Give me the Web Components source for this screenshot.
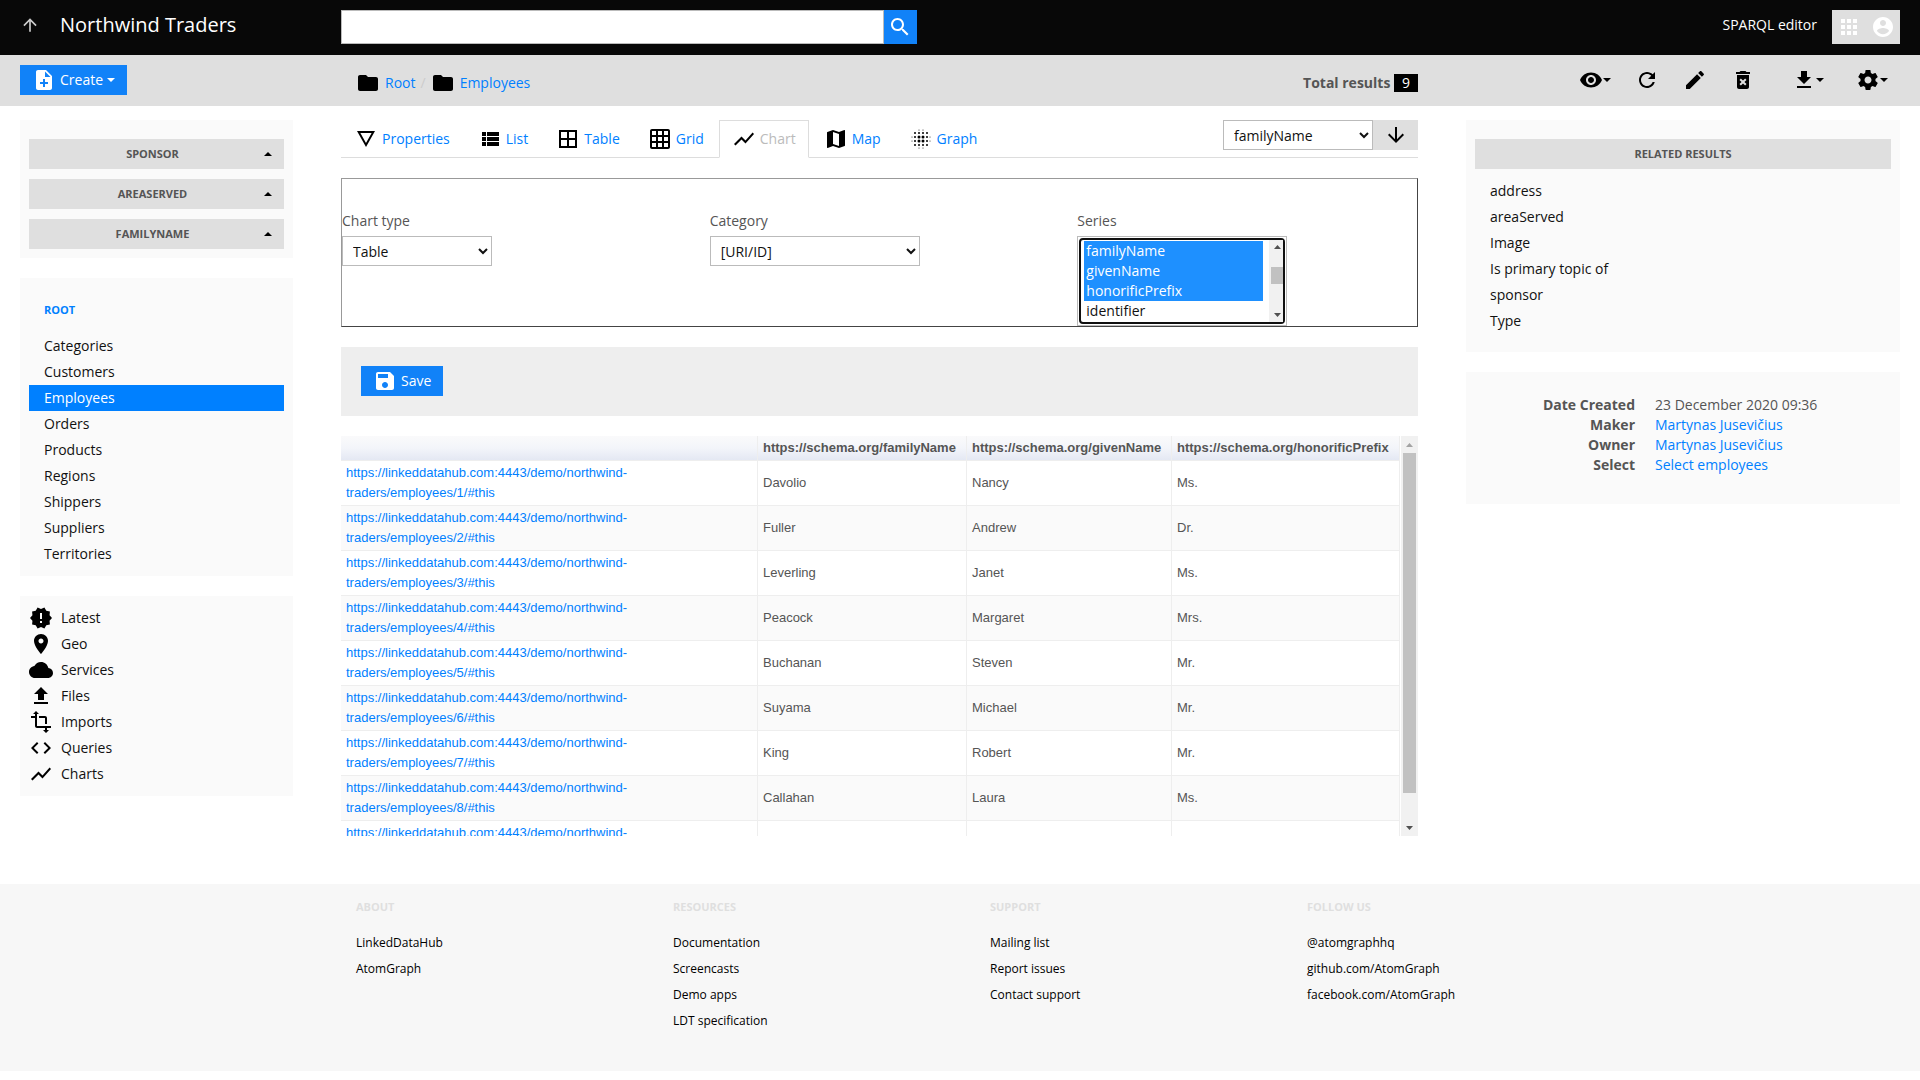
<!DOCTYPE html>
<html lang="en">
<head>
<meta charset="utf-8">
<title>Employees - Northwind Traders</title>
<style>
  body {
    margin: 0;
    background: #fff;
    color: #555;
    font: 14px/20px 'Open Sans', sans-serif;
  }
  .columns {
    display: grid;
    grid-template-columns: 273fr 1077fr 434fr;
    gap: 48px;
    align-items: start;
    padding: 14px 20px 48px;
  }
  .stack {
    display: grid;
    gap: 20px;
    min-width: 0;
  }
</style>
</head>
<body>
<ldh-navbar></ldh-navbar>
<ldh-action-bar></ldh-action-bar>
<div class="columns">
  <aside class="stack">
    <ldh-facets names="sponsor,areaServed,familyName"></ldh-facets>
    <ldh-nav-list heading="Root" current="Employees"
      items="Categories,Customers,Employees,Orders,Products,Regions,Shippers,Suppliers,Territories"></ldh-nav-list>
    <ldh-app-links></ldh-app-links>
  </aside>
  <main class="stack">
    <ldh-view-tabs></ldh-view-tabs>
    <ldh-chart-form></ldh-chart-form>
    <ldh-form-actions>
      <ldh-button icon="save">Save</ldh-button>
    </ldh-form-actions>
    <ldh-result-table></ldh-result-table>
  </main>
  <aside class="stack">
    <ldh-related-results></ldh-related-results>
    <ldh-metadata></ldh-metadata>
  </aside>
</div>
<ldh-footer></ldh-footer>

<script>
const ICONS = {
  up: '<path d="M4 12l1.41 1.41L11 7.83V20h2V7.83l5.58 5.59L20 12l-8-8-8 8z"/>',
  down: '<path d="M20 12l-1.41-1.41L13 16.17V4h-2v12.17l-5.58-5.59L4 12l8 8 8-8z"/>',
  search: '<path d="M15.5 14h-.79l-.28-.27C15.41 12.59 16 11.11 16 9.5 16 5.91 13.09 3 9.5 3S3 5.91 3 9.5 5.91 16 9.5 16c1.61 0 3.09-.59 4.23-1.57l.27.28v.79l5 4.99L20.49 19l-4.99-5zm-6 0C7.01 14 5 11.99 5 9.5S7.01 5 9.5 5 14 7.01 14 9.5 11.99 14 9.5 14z"/>',
  apps: '<path d="M4 8h4V4H4v4zm6 12h4v-4h-4v4zm-6 0h4v-4H4v4zm0-6h4v-4H4v4zm6 0h4v-4h-4v4zm6-10v4h4V4h-4zm-6 4h4V4h-4v4zm6 6h4v-4h-4v4zm0 6h4v-4h-4v4z"/>',
  account: '<path d="M12 2C6.48 2 2 6.48 2 12s4.48 10 10 10 10-4.48 10-10S17.52 2 12 2zm0 3c1.66 0 3 1.34 3 3s-1.34 3-3 3-3-1.34-3-3 1.34-3 3-3zm0 14.2c-2.5 0-4.71-1.28-6-3.22.03-1.99 4-3.08 6-3.08 1.99 0 5.97 1.09 6 3.08-1.29 1.94-3.5 3.22-6 3.22z"/>',
  'note-add': '<path d="M14 2H6c-1.1 0-1.99.9-1.99 2L4 20c0 1.1.89 2 1.99 2H18c1.1 0 2-.9 2-2V8l-6-6zm2 14h-3v3h-2v-3H8v-2h3v-3h2v3h3v2zm-3-7V3.5L18.5 9H13z"/>',
  folder: '<path d="M10 4H4c-1.1 0-1.99.9-1.99 2L2 18c0 1.1.9 2 2 2h16c1.1 0 2-.9 2-2V8c0-1.1-.9-2-2-2h-8l-2-2z"/>',
  eye: '<path d="M12 4.5C7 4.5 2.73 7.61 1 12c1.73 4.39 6 7.5 11 7.5s9.27-3.11 11-7.5c-1.73-4.39-6-7.5-11-7.5zM12 17c-2.76 0-5-2.24-5-5s2.24-5 5-5 5 2.24 5 5-2.24 5-5 5zm0-8c-1.66 0-3 1.34-3 3s1.34 3 3 3 3-1.34 3-3-1.34-3-3-3z"/>',
  refresh: '<path d="M17.65 6.35C16.2 4.9 14.21 4 12 4c-4.42 0-7.99 3.58-7.99 8s3.57 8 7.99 8c3.73 0 6.84-2.55 7.73-6h-2.08c-.82 2.33-3.04 4-5.65 4-3.31 0-6-2.69-6-6s2.69-6 6-6c1.66 0 3.14.69 4.22 1.78L13 11h7V4l-2.35 2.35z"/>',
  edit: '<path d="M3 17.25V21h3.75L17.81 9.94l-3.75-3.75L3 17.25zM20.71 7.04c.39-.39.39-1.02 0-1.41l-2.34-2.34c-.39-.39-1.02-.39-1.41 0l-1.83 1.83 3.75 3.75 1.83-1.83z"/>',
  trash: '<path d="M6 19c0 1.1.9 2 2 2h8c1.1 0 2-.9 2-2V7H6v12zm2.46-7.12l1.41-1.41L12 12.59l2.12-2.12 1.41 1.41L13.41 14l2.12 2.12-1.41 1.41L12 15.41l-2.12 2.12-1.41-1.41L10.59 14l-2.13-2.12zM15.5 4l-1-1h-5l-1 1H5v2h14V4z"/>',
  download: '<path d="M19 9h-4V3H9v6H5l7 7 7-7zM5 18v2h14v-2H5z"/>',
  upload: '<path d="M9 16h6v-6h4l-7-7-7 7h4zm-4 2h14v2H5z"/>',
  settings: '<path d="M19.43 12.98c.04-.32.07-.64.07-.98s-.03-.66-.07-.98l2.11-1.65c.19-.15.24-.42.12-.64l-2-3.46c-.12-.22-.39-.3-.61-.22l-2.49 1c-.52-.4-1.08-.73-1.69-.98l-.38-2.65C14.46 2.18 14.25 2 14 2h-4c-.25 0-.46.18-.49.42l-.38 2.65c-.61.25-1.17.59-1.69.98l-2.49-1c-.23-.09-.49 0-.61.22l-2 3.46c-.13.22-.07.49.12.64l2.11 1.65c-.04.32-.07.65-.07.98s.03.66.07.98l-2.11 1.65c-.19.15-.24.42-.12.64l2 3.46c.12.22.39.3.61.22l2.49-1c.52.4 1.08.73 1.69.98l.38 2.65c.03.24.24.42.49.42h4c.25 0 .46-.18.49-.42l.38-2.65c.61-.25 1.17-.59 1.69-.98l2.49 1c.23.09.49 0 .61-.22l2-3.46c.12-.22.07-.49-.12-.64l-2.11-1.65zM12 15.5c-1.93 0-3.5-1.57-3.5-3.5s1.57-3.5 3.5-3.5 3.5 1.57 3.5 3.5-1.57 3.5-3.5 3.5z"/>',
  details: '<path d="M3 4l9 16 9-16H3zm3.38 2h11.25L12 16 6.38 6z"/>',
  list: '<path d="M4 14h4v-4H4v4zm0 5h4v-4H4v4zM4 9h4V5H4v4zm5 5h12v-4H9v4zm0 5h12v-4H9v4zM9 5v4h12V5H9z"/>',
  table: '<path d="M3 3v18h18V3H3zm8 16H5v-6h6v6zm0-8H5V5h6v6zm8 8h-6v-6h6v6zm0-8h-6V5h6v6z"/>',
  grid: '<path d="M20 2H4c-1.1 0-2 .9-2 2v16c0 1.1.9 2 2 2h16c1.1 0 2-.9 2-2V4c0-1.1-.9-2-2-2zM8 20H4v-4h4v4zm0-6H4v-4h4v4zm0-6H4V4h4v4zm6 12h-4v-4h4v4zm0-6h-4v-4h4v4zm0-6h-4V4h4v4zm6 12h-4v-4h4v4zm0-6h-4v-4h4v4zm0-6h-4V4h4v4z"/>',
  chart: '<path d="M3.5 18.49l6-6.01 4 4L22 6.92l-1.41-1.41-7.09 7.97-4-4L2 16.99z"/>',
  map: '<path d="M20.5 3l-.16.03L15 5.1 9 3 3.36 4.9c-.21.07-.36.25-.36.48V20.5c0 .28.22.5.5.5l.16-.03L9 18.9l6 2.1 5.64-1.9c.21-.07.36-.25.36-.48V3.5c0-.28-.22-.5-.5-.5zM15 19l-6-2.11V5l6 2.11V19z"/>',
  latest: '<path d="M23 12l-2.44-2.78.34-3.68-3.61-.82-1.89-3.18L12 3 8.6 1.54 6.71 4.72l-3.61.81.34 3.68L1 12l2.44 2.78-.34 3.69 3.61.82 1.89 3.18L12 21l3.4 1.46 1.89-3.18 3.61-.82-.34-3.68L23 12zm-10 5h-2v-2h2v2zm0-4h-2V7h2v6z"/>',
  place: '<path d="M12 2C8.13 2 5 5.13 5 9c0 5.25 7 13 7 13s7-7.75 7-13c0-3.87-3.13-7-7-7zm0 9.5c-1.38 0-2.5-1.12-2.5-2.5s1.12-2.5 2.5-2.5 2.5 1.12 2.5 2.5-1.12 2.5-2.5 2.5z"/>',
  cloud: '<path d="M19.35 10.04C18.67 6.59 15.64 4 12 4 9.11 4 6.6 5.64 5.35 8.04 2.34 8.36 0 10.91 0 14c0 3.31 2.69 6 6 6h13c2.76 0 5-2.24 5-5 0-2.64-2.05-4.78-4.65-4.96z"/>',
  transform: '<path d="M22 18v-2H8V4h2L7 1 4 4h2v2H2v2h4v8c0 1.1.9 2 2 2h8v2h-2l3 3 3-3h-2v-2h4zM10 8h6v6h2V8c0-1.1-.9-2-2-2h-6v2z"/>',
  code: '<path d="M9.4 16.6L4.8 12l4.6-4.6L8 6l-6 6 6 6 1.4-1.4zm5.2 0l4.6-4.6-4.6-4.6L16 6l6 6-6 6-1.4-1.4z"/>',
  save: '<path d="M17 3H5c-1.11 0-2 .9-2 2v14c0 1.1.89 2 2 2h14c1.1 0 2-.9 2-2V7l-4-4zm-5 16c-1.66 0-3-1.34-3-3s1.34-3 3-3 3 1.34 3 3-1.34 3-3 3zm3-10H5V5h10v4z"/>',
  graph: [3, 6, 10, 14, 18, 21].map(y => [3, 6, 10, 14, 18, 21].map(x => {
    // dots shrink from the middle outwards, the corners stay empty
    const ox = Math.abs(x - 12), oy = Math.abs(y - 12), far = Math.max(ox, oy);
    if (far === 9 && Math.min(ox, oy) > 2) return '';
    return `<circle cx="${x}" cy="${y}" r="${far === 9 ? .5 : far === 6 ? 1 : 1.5}"/>`;
  }).join('')).join('')
};

const BASE = `
  :host { display: block; box-sizing: border-box; }
  * { box-sizing: border-box; }
  a { color: #0080ff; text-decoration: none; }
  ul, dl, dd { margin: 0; padding: 0; list-style: none; }
  button { font: inherit; border: 0; border-radius: 0; padding: 0; cursor: pointer; }
  select, input { font: inherit; color: #111; background: #fff; border: 1px solid #bbb; border-radius: 0; margin: 0; }
  select { height: 30px; padding: 4px 6px; }
`;
const HEADING = `
  h2 { margin: 0; font-size: 11px; font-weight: 700; line-height: 20px; text-transform: uppercase; }
`;

class LdhElement extends HTMLElement {
  constructor() {
    super();
    this.attachShadow({ mode: 'open' });
  }
  connectedCallback() {
    this.shadowRoot.innerHTML = `<style>${BASE}${this.styles()}</style>${this.render()}`;
  }
  styles() { return ''; }
  render() { return '<slot></slot>'; }
}

class LdhIcon extends LdhElement {
  styles() {
    return `
      :host { display: flex; flex: none; width: 24px; height: 24px; }
      :host([small]) { width: 20px; height: 20px; }
      svg { width: 100%; height: 100%; fill: currentColor; }
    `;
  }
  render() {
    return `<svg viewBox="0 0 24 24" aria-hidden="true">${ICONS[this.getAttribute('name')]}</svg>`;
  }
}

class LdhCaret extends LdhElement {
  styles() {
    return `
      :host { flex: none; box-sizing: content-box; width: 0; height: 0; border: solid transparent; border-width: 4px 4px 0; border-top-color: currentColor; }
      :host([up]) { border-width: 0 4px 4px; border-bottom-color: currentColor; }
    `;
  }
  render() { return ''; }
}

// Classic scrollbar with arrow buttons; --before and --after set the shares of the track around the thumb
class LdhScrollbar extends LdhElement {
  styles() {
    return `
      :host { display: block; width: 17px; overflow: hidden; background: #f1f1f1; }
      .track { display: grid; grid-template-rows: var(--button, 17px) var(--before, 0fr) var(--thumb, 1fr) var(--after, 0fr) var(--button, 17px); width: 17px; height: 100%; justify-items: center; }
      svg { align-self: center; width: 7px; height: 4px; fill: #505050; }
      svg:first-child { grid-row: 1; fill: var(--up, #505050); }
      svg:last-child { grid-row: 5; }
      .thumb { grid-row: 3; width: 13px; background: #c1c1c1; }
    `;
  }
  render() {
    return `
      <div class="track" aria-hidden="true">
        <svg viewBox="0 0 7 4"><path d="M0 4l3.5-4L7 4z"/></svg>
        <div class="thumb"></div>
        <svg viewBox="0 0 7 4"><path d="M0 0l3.5 4L7 0z"/></svg>
      </div>`;
  }
}

class LdhButton extends LdhElement {
  styles() {
    return `
      :host { display: inline-block; }
      button { display: flex; align-items: center; gap: 4px; height: 30px; padding: 0 12px; background: #1182f8; color: #fff; }
    `;
  }
  render() {
    return `<button type="button"><ldh-icon name="${this.getAttribute('icon')}"></ldh-icon><slot></slot>${this.hasAttribute('dropdown') ? '<ldh-caret></ldh-caret>' : ''}</button>`;
  }
}

class LdhWell extends LdhElement {
  styles() {
    return ':host { padding: 19px 9px 9px; background: #fafafa; } :host([tight]) { padding-top: 9px; }';
  }
}

class LdhNavbar extends LdhElement {
  styles() {
    return `
      header { display: grid; grid-template-columns: 273fr 1077fr 434fr; gap: 48px; height: 55px; padding: 0 20px; background: #080808; color: #fff; }
      a { color: #fff; }
      .brand { display: flex; align-items: center; gap: 20px; height: 50px; font-size: 20px; }
      .brand ldh-icon { color: #ccc; }
      form { display: flex; width: 576px; padding: 10px 0 11px; }
      input { flex: 1; min-width: 0; padding: 4px 6px; }
      form button { width: 33px; padding: 5px 4px; background: #1182f8; color: #fff; }
      .user { display: flex; justify-content: flex-end; gap: 15px; }
      .user a { padding: 15px 0; }
      .menu { display: flex; height: 34px; margin-top: 10px; background: #dfdfdf; }
      .menu button { width: 34px; padding: 5px; background: none; color: #fff; }
    `;
  }
  render() {
    return `
      <header>
        <div class="brand"><a href="#" aria-label="Up"><ldh-icon name="up" small></ldh-icon></a><a href="#">Northwind Traders</a></div>
        <form role="search">
          <input type="text" aria-label="Search">
          <button type="button" aria-label="Search"><ldh-icon name="search"></ldh-icon></button>
        </form>
        <div class="user">
          <a href="#">SPARQL editor</a>
          <div class="menu">
            <button type="button" aria-label="Apps"><ldh-icon name="apps"></ldh-icon></button>
            <button type="button" aria-label="Account"><ldh-icon name="account"></ldh-icon></button>
          </div>
        </div>
      </header>`;
  }
}

class LdhActionBar extends LdhElement {
  styles() {
    return `
      :host { display: grid; grid-template-columns: 273fr 1077fr 434fr; gap: 48px; height: 51px; padding: 10px 20px; background: #dfdfdf; }
      .crumbs { display: flex; align-items: center; gap: 5px; height: 36px; padding-left: 15px; }
      .crumbs ldh-icon { color: #000; }
      .crumbs i { color: #ccc; font-style: normal; }
      .total { margin: 0 0 0 auto; font-weight: 700; }
      .total span { display: inline-block; height: 18px; line-height: 18px; padding: 0 8px; background: #000; color: #fff; font-weight: 400; }
      .tools { display: flex; justify-content: flex-end; height: 30px; color: #000; }
      .tools button { display: flex; align-items: center; padding: 0 12px; background: none; color: #000; }
      .tools .download { margin: 0 8px 0 13px; }
    `;
  }
  render() {
    const tool = (icon, label, menu) => `<button type="button" class="${icon}" aria-label="${label}"><ldh-icon name="${icon}"></ldh-icon>${menu ? '<ldh-caret></ldh-caret>' : ''}</button>`;
    return `
      <div><ldh-button icon="note-add" dropdown>Create</ldh-button></div>
      <nav class="crumbs">
        <ldh-icon name="folder"></ldh-icon><a href="#">Root</a><i>/</i><ldh-icon name="folder"></ldh-icon><a href="#">Employees</a>
        <p class="total">Total results <span>9</span></p>
      </nav>
      <div class="tools">
        ${tool('eye', 'View', true)}${tool('refresh', 'Refresh')}${tool('edit', 'Edit')}${tool('trash', 'Delete')}${tool('download', 'Export', true)}${tool('settings', 'Settings', true)}
      </div>`;
  }
}

class LdhFacets extends LdhElement {
  styles() {
    return HEADING + `
      .facets { display: grid; gap: 10px; }
      h2 { height: 30px; }
      button { display: flex; align-items: center; width: 100%; height: 30px; padding: 0 12px; background: #dfdfdf; color: #555; text-transform: inherit; }
      button span { flex: 1; text-align: center; }
      ldh-caret { color: #000; }
    `;
  }
  render() {
    const names = this.getAttribute('names').split(',');
    return `<ldh-well><div class="facets">${names.map(n => `<h2><button type="button"><span>${n}</span><ldh-caret up></ldh-caret></button></h2>`).join('')}</div></ldh-well>`;
  }
}

class LdhNavList extends LdhElement {
  styles() {
    return HEADING + `
      h2 { padding: 3px 15px; margin-bottom: 10px; }
      li a { display: block; padding: 3px 15px; color: #111; }
      li a[aria-current] { background: #0080ff; color: #fff; }
    `;
  }
  render() {
    const items = this.getAttribute('items').split(',');
    const current = this.getAttribute('current');
    return `
      <ldh-well>
        <h2><a href="#">${this.getAttribute('heading')}</a></h2>
        <ul>${items.map(i => `<li><a href="#"${i === current ? ' aria-current="page"' : ''}>${i}</a></li>`).join('')}</ul>
      </ldh-well>`;
  }
}

class LdhAppLinks extends LdhElement {
  styles() {
    return `
      a { display: flex; align-items: center; gap: 8px; height: 26px; color: #111; }
      ldh-icon { color: #000; }
    `;
  }
  render() {
    const links = [['latest', 'Latest'], ['place', 'Geo'], ['cloud', 'Services'], ['upload', 'Files'], ['transform', 'Imports'], ['code', 'Queries'], ['chart', 'Charts']];
    return `<ldh-well tight><ul>${links.map(([icon, text]) => `<li><a href="#"><ldh-icon name="${icon}"></ldh-icon>${text}</a></li>`).join('')}</ul></ldh-well>`;
  }
}

class LdhViewTabs extends LdhElement {
  styles() {
    return `
      :host { display: flex; justify-content: space-between; height: 38px; border-bottom: 1px solid #ddd; }
      ul { display: flex; gap: 2px; height: 38px; }
      li a { display: flex; align-items: center; gap: 4px; height: 38px; padding: 0 12px; border: 1px solid transparent; }
      li a[aria-current] { background: #fff; border-color: #ddd #ddd #fff; color: #bbb; }
      ldh-icon { color: #000; }
      .order { display: flex; height: 30px; }
      select { width: 150px; }
      button { width: 45px; height: 30px; background: #dfdfdf; display: flex; align-items: center; justify-content: center; }
    `;
  }
  render() {
    const tabs = [['details', 'Properties'], ['list', 'List'], ['table', 'Table'], ['grid', 'Grid'], ['chart', 'Chart'], ['map', 'Map'], ['graph', 'Graph']];
    return `
      <ul>${tabs.map(([icon, text]) => `<li><a href="#"${text === 'Chart' ? ' aria-current="page"' : ''}><ldh-icon name="${icon}"></ldh-icon>${text}</a></li>`).join('')}</ul>
      <div class="order">
        <select aria-label="Order by"><option>familyName</option></select>
        <button type="button" aria-label="Descending"><ldh-icon name="down"></ldh-icon></button>
      </div>`;
  }
}

class LdhChartForm extends LdhElement {
  connectedCallback() {
    super.connectedCallback();
    this.shadowRoot.getElementById('series').scrollTop = 60;
  }
  styles() {
    return `
      form { display: grid; grid-template-columns: repeat(3, 1fr); gap: 28px; padding-top: 32px; border: 1px solid; border-color: #999 #444 #444 #999; }
      label { display: block; margin-bottom: 5px; }
      select { display: block; width: 210px; }
      #type { width: 150px; }
      .listbox { position: relative; width: 210px; }
      #series { height: 90px; padding-right: 23px; outline: #101010 auto 1px; outline-offset: -2px; overflow-y: scroll; scrollbar-width: none; }
      #series option { height: 20px; min-height: 20px; line-height: 20px; padding: 0 2px; }
      #series option:checked { background: #1e90ff linear-gradient(#1e90ff, #1e90ff); color: #fff; }
      ldh-scrollbar { position: absolute; top: 4px; right: 4px; bottom: 4px; width: 14px; --button: 14px; --before: 13fr; --thumb: 17fr; --after: 24fr; }
    `;
  }
  render() {
    const series = ['address', 'Image', 'areaServed', 'familyName', 'givenName', 'honorificPrefix', 'identifier', 'Is primary topic of', 'jobTitle', 'sponsor', 'telephone', 'Title', 'Type', 'worksFor'];
    const selected = ['familyName', 'givenName', 'honorificPrefix'];
    return `
      <form>
        <div><label for="type">Chart type</label><select id="type"><option>Table</option></select></div>
        <div><label for="category">Category</label><select id="category"><option>[URI/ID]</option></select></div>
        <div>
          <label for="series">Series</label>
          <div class="listbox">
            <select id="series" multiple size="4">${series.map(s => `<option${selected.includes(s) ? ' selected' : ''}>${s}</option>`).join('')}</select>
            <ldh-scrollbar></ldh-scrollbar>
          </div>
        </div>
      </form>`;
  }
}

class LdhFormActions extends LdhElement {
  styles() {
    return ':host { display: flex; padding: 19px 20px 20px; background: #eee; }';
  }
}

class LdhResultTable extends LdhElement {
  styles() {
    return `
      :host { display: flex; height: 400px; }
      .scroll { flex: 1; min-width: 0; padding-right: 1px; overflow-y: auto; scrollbar-width: none; }
      table { width: 100%; table-layout: fixed; border-collapse: separate; border-spacing: 0; font: 13px/20px 'Liberation Sans', Arial, sans-serif; }
      th, td { padding: 2px 5px; text-align: left; border: solid #eee; border-width: 0 1px 1px 0; vertical-align: middle; }
      th { height: 25px; white-space: nowrap; background: linear-gradient(#fafafb, #f3f5fa 50%, #e4e8f3); }
      th:nth-child(2) { width: 209px; }
      th:nth-child(3) { width: 205px; }
      th:nth-child(4) { width: 228px; }
      td { height: 45px; }
      tr:nth-child(even) td { background: #fafafa; }
      ldh-scrollbar { --up: #a3a3a3; --thumb: 340fr; --after: 26fr; }
    `;
  }
  render() {
    const people = [['Davolio', 'Nancy', 'Ms.'], ['Fuller', 'Andrew', 'Dr.'], ['Leverling', 'Janet', 'Ms.'], ['Peacock', 'Margaret', 'Mrs.'], ['Buchanan', 'Steven', 'Mr.'], ['Suyama', 'Michael', 'Mr.'], ['King', 'Robert', 'Mr.'], ['Callahan', 'Laura', 'Ms.'], ['Dodsworth', 'Anne', 'Ms.']];
    return `
      <div class="scroll">
        <table>
          <thead><tr><th></th>${['familyName', 'givenName', 'honorificPrefix'].map(p => `<th>https://schema.org/${p}</th>`).join('')}</tr></thead>
          <tbody>${people.map((p, i) => `<tr><td><a href="#">https://linkeddatahub.com:4443/demo/northwind-traders/employees/${i + 1}/#this</a></td>${p.map(v => `<td>${v}</td>`).join('')}</tr>`).join('')}</tbody>
        </table>
      </div>
      <ldh-scrollbar></ldh-scrollbar>`;
  }
}

class LdhRelatedResults extends LdhElement {
  styles() {
    return HEADING + `
      h2 { padding: 5px 12px; background: #dfdfdf; text-align: center; }
      ul { margin: 9px 0; }
      li a { display: block; padding: 3px 15px; color: #111; }
    `;
  }
  render() {
    return `
      <ldh-well>
        <h2>Related results</h2>
        <ul>${['address', 'areaServed', 'Image', 'Is primary topic of', 'sponsor', 'Type'].map(i => `<li><a href="#">${i}</a></li>`).join('')}</ul>
      </ldh-well>`;
  }
}

class LdhMetadata extends LdhElement {
  styles() {
    return `
      dl { display: grid; grid-template-columns: 160px 1fr; column-gap: 20px; padding: 4px 0 20px; }
      dt { font-weight: 700; text-align: right; }
    `;
  }
  render() {
    return `
      <ldh-well>
        <dl>
          <dt>Date Created</dt><dd>23 December 2020 09:36</dd>
          <dt>Maker</dt><dd><a href="#">Martynas Jusevičius</a></dd>
          <dt>Owner</dt><dd><a href="#">Martynas Jusevičius</a></dd>
          <dt>Select</dt><dd><a href="#">Select employees</a></dd>
        </dl>
      </ldh-well>`;
  }
}

class LdhFooter extends LdhElement {
  styles() {
    return HEADING + `
      footer { display: grid; grid-template-columns: 341fr repeat(4, 317fr) 311fr; padding: 10px 0 37px; background: #f7f7f7; font-size: 12px; }
      section { padding-left: 15px; }
      section:first-child { grid-column: 2; }
      h2 { padding: 3px 0; margin-bottom: 10px; color: #dfdfdf; }
      li a { display: block; padding: 3px 0; color: #000; }
    `;
  }
  render() {
    const columns = {
      'About': ['LinkedDataHub', 'AtomGraph'],
      'Resources': ['Documentation', 'Screencasts', 'Demo apps', 'LDT specification'],
      'Support': ['Mailing list', 'Report issues', 'Contact support'],
      'Follow us': ['@atomgraphhq', 'github.com/AtomGraph', 'facebook.com/AtomGraph']
    };
    return `<footer>${Object.entries(columns).map(([title, links]) => `
      <section><h2>${title}</h2><ul>${links.map(l => `<li><a href="#">${l}</a></li>`).join('')}</ul></section>`).join('')}</footer>`;
  }
}

customElements.define('ldh-icon', LdhIcon);
customElements.define('ldh-caret', LdhCaret);
customElements.define('ldh-scrollbar', LdhScrollbar);
customElements.define('ldh-button', LdhButton);
customElements.define('ldh-well', LdhWell);
customElements.define('ldh-navbar', LdhNavbar);
customElements.define('ldh-action-bar', LdhActionBar);
customElements.define('ldh-facets', LdhFacets);
customElements.define('ldh-nav-list', LdhNavList);
customElements.define('ldh-app-links', LdhAppLinks);
customElements.define('ldh-view-tabs', LdhViewTabs);
customElements.define('ldh-chart-form', LdhChartForm);
customElements.define('ldh-form-actions', LdhFormActions);
customElements.define('ldh-result-table', LdhResultTable);
customElements.define('ldh-related-results', LdhRelatedResults);
customElements.define('ldh-metadata', LdhMetadata);
customElements.define('ldh-footer', LdhFooter);
</script>
</body>
</html>
